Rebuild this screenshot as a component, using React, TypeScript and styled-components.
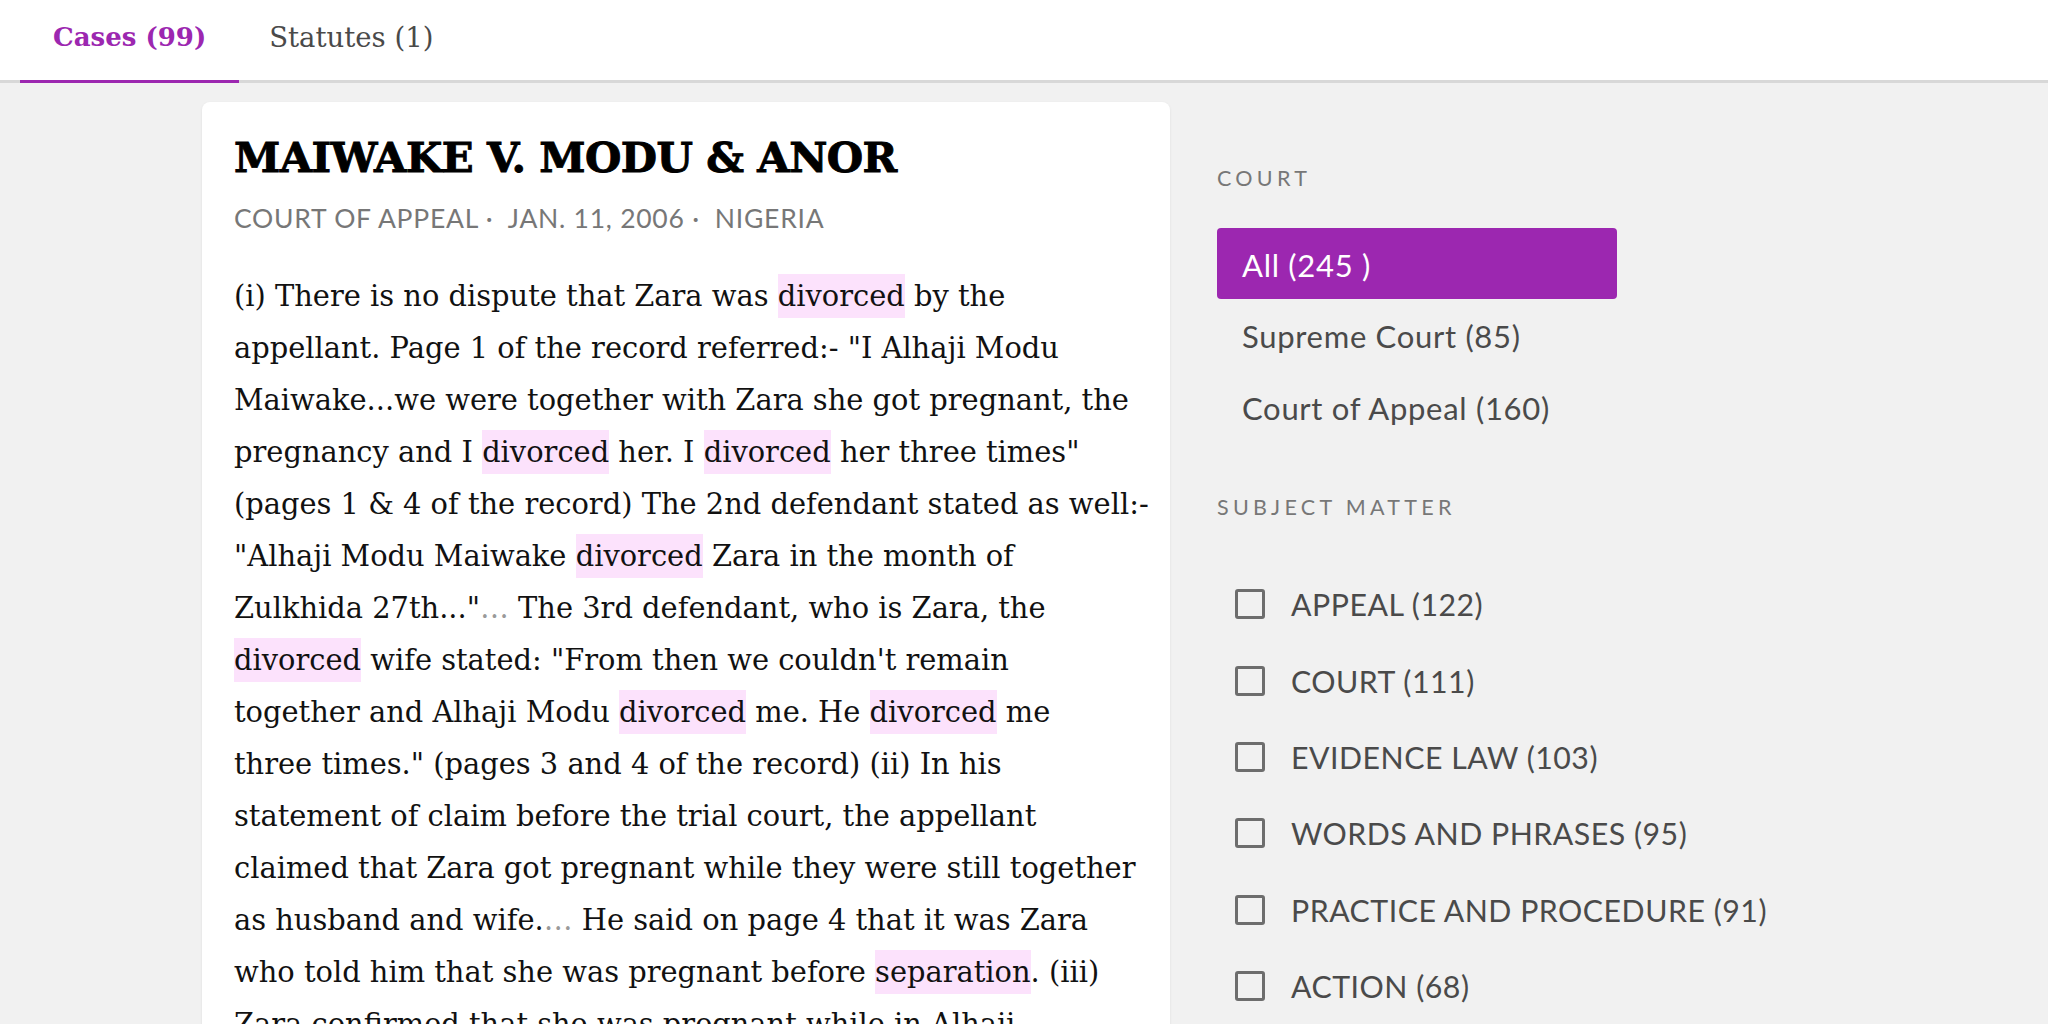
import React from "react";
import styled, { createGlobalStyle } from "styled-components";

const GlobalStyle = createGlobalStyle`
  html, body {
    margin: 0;
    padding: 0;
    background: #f1f1f1;
  }
  body {
    font-family: "Lato", "Open Sans", sans-serif;
  }
`;

const Page = styled.div`
  min-height: 100vh;
  background: #f1f1f1;
  overflow: hidden;
`;

const TabBar = styled.nav`
  display: flex;
  height: 80px;
  padding-left: 20px;
  background: #ffffff;
  border-bottom: 3px solid #d8d8d8;
`;

const Tab = styled.div<{ $active?: boolean }>`
  display: flex;
  align-items: center;
  padding: 0 ${(p) => (p.$active ? 33 : 30)}px 6px;
  margin-bottom: -3px;
  font-family: "DejaVu Serif", serif;
  font-size: ${(p) => (p.$active ? 26 : 27.5)}px;
  font-weight: ${(p) => (p.$active ? 700 : 400)};
  color: ${(p) => (p.$active ? "#9c27b0" : "#4a4a4a")};
  border-bottom: 3px solid ${(p) => (p.$active ? "#9c27b0" : "transparent")};
`;

const Main = styled.main`
  display: flex;
  align-items: flex-start;
  gap: 47px;
  padding: 19px 0 0 202px;
`;

const Card = styled.article`
  box-sizing: border-box;
  width: 968px;
  flex: none;
  padding: 30px 32px 40px;
  background: #ffffff;
  border-radius: 8px;
  box-shadow: 0 1px 3px rgba(0, 0, 0, 0.08);
`;

const Title = styled.h1`
  margin: 0;
  font-family: "DejaVu Serif", serif;
  font-size: 41.8px;
  font-weight: 700;
  line-height: 52px;
  letter-spacing: -0.6px;
  color: #000000;
  -webkit-text-stroke: 0.9px #000000;
`;

const Meta = styled.div`
  margin-top: 16px;
  font-family: "Lato", sans-serif;
  font-size: 26.5px;
  line-height: 36px;
  letter-spacing: 0.75px;
  color: #777777;
  text-transform: uppercase;
  white-space: pre;
`;

const Excerpt = styled.p`
  margin: 34px 0 0;
  font-family: "DejaVu Serif", serif;
  font-size: 28.9px;
  line-height: 52px;
  color: #111111;
  white-space: nowrap;
`;

const Hl = styled.span`
  background: #fce2fc;
  padding: 5px 0;
`;

const Ellipsis = styled.span`
  color: #9a9a9a;
`;

const Sidebar = styled.aside`
  flex: 1;
  min-width: 0;
  padding-top: 61px;
`;

const SectionLabel = styled.h3<{ $gap?: number }>`
  margin: ${(p) => p.$gap ?? 0}px 0 0;
  font-family: "Lato", sans-serif;
  font-size: 21.5px;
  font-weight: 400;
  line-height: 30px;
  letter-spacing: 4.3px;
  color: #777777;
  text-transform: uppercase;
`;

const CourtList = styled.ul`
  list-style: none;
  margin: 35px 0 0;
  padding: 0;
  display: flex;
  flex-direction: column;
`;

const CourtItem = styled.li<{ $active?: boolean }>`
  box-sizing: border-box;
  width: 400px;
  height: ${(p) => (p.$active ? 71 : 72)}px;
  display: flex;
  align-items: center;
  padding: 2px 0 0 25px;
  font-size: 31px;
  letter-spacing: 0.7px;
  white-space: nowrap;
  border-radius: 4px;
  background: ${(p) => (p.$active ? "#9c27b0" : "transparent")};
  color: ${(p) => (p.$active ? "#ffffff" : "#4a4a4a")};
`;

const CheckList = styled.ul`
  list-style: none;
  margin: 44px 0 0;
  padding: 0;
  display: flex;
  flex-direction: column;
`;

const CheckRow = styled.li`
  height: 76.4px;
  display: flex;
  align-items: center;
  gap: 26px;
  padding-left: 18px;
  font-size: 30.3px;
  letter-spacing: 0.5px;
  white-space: nowrap;
  color: #4a4a4a;
`;

const Box = styled.span`
  box-sizing: border-box;
  width: 30px;
  height: 30px;
  flex: none;
  border: 3px solid #6d6d6d;
  border-radius: 3px;
`;

const courts = [
  { label: "All (245 )", active: true },
  { label: "Supreme Court (85)" },
  { label: "Court of Appeal (160)" },
];

const subjects = [
  "APPEAL (122)",
  "COURT (111)",
  "EVIDENCE LAW (103)",
  "WORDS AND PHRASES (95)",
  "PRACTICE AND PROCEDURE (91)",
  "ACTION (68)",
  "JUDGMENT AND ORDER (60)",
];

export default function App() {
  return (
    <Page>
      <GlobalStyle />
      <TabBar>
        <Tab $active>Cases (99)</Tab>
        <Tab>Statutes (1)</Tab>
      </TabBar>
      <Main>
        <Card>
          <Title>MAIWAKE V. MODU &amp; ANOR</Title>
          <Meta>{"COURT OF APPEAL ·  JAN. 11, 2006 ·  NIGERIA"}</Meta>
          <Excerpt>
            (i) There is no dispute that Zara was <Hl>divorced</Hl> by the
            <br />
            appellant. Page 1 of the record referred:- "I Alhaji Modu
            <br />
            Maiwake...we were together with Zara she got pregnant, the
            <br />
            pregnancy and I <Hl>divorced</Hl> her. I <Hl>divorced</Hl> her three times"
            <br />
            (pages 1 &amp; 4 of the record) The 2nd defendant stated as well:-
            <br />
            "Alhaji Modu Maiwake <Hl>divorced</Hl> Zara in the month of
            <br />
            Zulkhida 27th..."<Ellipsis>…</Ellipsis> The 3rd defendant, who is Zara, the
            <br />
            <Hl>divorced</Hl> wife stated: "From then we couldn't remain
            <br />
            together and Alhaji Modu <Hl>divorced</Hl> me. He <Hl>divorced</Hl> me
            <br />
            three times." (pages 3 and 4 of the record) (ii) In his
            <br />
            statement of claim before the trial court, the appellant
            <br />
            claimed that Zara got pregnant while they were still together
            <br />
            as husband and wife.<Ellipsis>…</Ellipsis> He said on page 4 that it was Zara
            <br />
            who told him that she was pregnant before <Hl>separation</Hl>. (iii)
            <br />
            Zara confirmed that she was pregnant while in Alhaji
            <br />
            Modu's house before the separation.
          </Excerpt>
        </Card>
        <Sidebar>
          <SectionLabel>Court</SectionLabel>
          <CourtList>
            {courts.map((c) => (
              <CourtItem key={c.label} $active={c.active}>
                {c.label}
              </CourtItem>
            ))}
          </CourtList>
          <SectionLabel $gap={49}>Subject Matter</SectionLabel>
          <CheckList>
            {subjects.map((s) => (
              <CheckRow key={s}>
                <Box />
                {s}
              </CheckRow>
            ))}
          </CheckList>
        </Sidebar>
      </Main>
    </Page>
  );
}
